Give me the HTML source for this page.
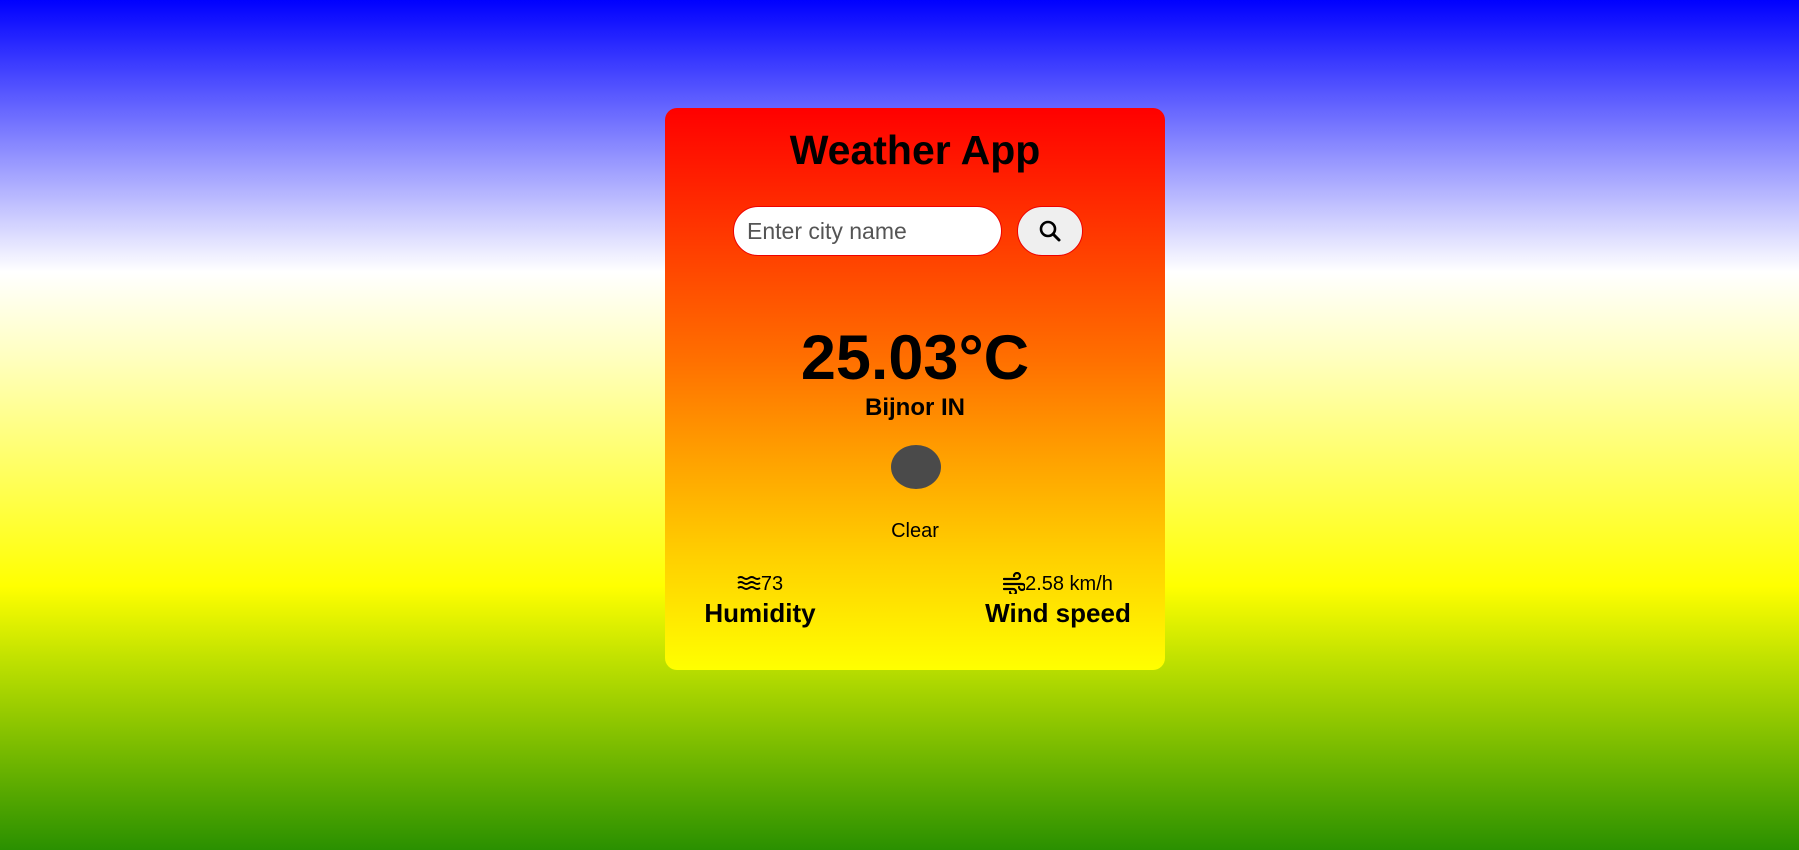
<!DOCTYPE html>
<html><head><style>
html,body{margin:0;width:1799px;height:850px;overflow:hidden}
body{background:linear-gradient(#0000ff 0%,#ffffff 32%,#ffffc0 42%,#ffff00 69%,#bde000 78%,#2a9000 100%);font-family:"Liberation Sans",sans-serif;position:relative}
.card{position:absolute;left:665px;top:108px;width:500px;height:562px;border-radius:12px;background:linear-gradient(#ff0000,#ff7000 45%,#ffa000 62%,#ffd000 80%,#ffff00)}
.abs{position:absolute;left:0;width:500px;text-align:center;color:#000}
h1{margin:0;font-size:41px;font-weight:bold;top:19px}
.inp{position:absolute;left:68px;top:98px;width:269px;height:50px;border-radius:25px;background:#fff;border:1px solid #e00;box-sizing:border-box;font-size:23px;color:#555;line-height:48px;padding-left:13px}
.btn{position:absolute;left:352px;top:98px;width:66px;height:50px;border-radius:25px;background:#efefef;border:1px solid #e00;box-sizing:border-box}
.blob{position:absolute;left:226px;top:337px;width:50px;height:44px;border-radius:50%;background:#4a4a4a}
</style></head><body>
<div class="card">
<h1 class="abs">Weather App</h1>
<div class="inp">Enter city name</div>
<div class="btn"><svg width="66" height="50" viewBox="0 0 66 50" style="position:absolute;left:-1px;top:-1px"><circle cx="31" cy="23" r="7" fill="none" stroke="#000" stroke-width="2.6"/><line x1="36" y1="28" x2="42" y2="34" stroke="#000" stroke-width="3" stroke-linecap="round"/></svg></div>
<div class="abs" style="top:212px;font-size:63px;font-weight:bold;line-height:76px">25.03°C</div>
<div class="abs" style="top:286px;font-size:24px;font-weight:bold">Bijnor IN</div>
<div class="blob"></div>
<div class="abs" style="top:412px;font-size:20px">Clear</div>
<div style="position:absolute;left:20px;width:150px;top:464px;text-align:center">
<div style="font-size:20px;line-height:24px"><svg width="24" height="16" viewBox="0 0 24 16" style="vertical-align:-1px"><path d="M1 3q2.75-2 5.5 0t5.5 0t5.5 0t5.5 0M1 8q2.75-2 5.5 0t5.5 0t5.5 0t5.5 0M1 13q2.75-2 5.5 0t5.5 0t5.5 0t5.5 0" fill="none" stroke="#000" stroke-width="2"/></svg>73</div>
<div style="font-size:26px;font-weight:bold;margin-top:2px">Humidity</div></div>
<div style="position:absolute;left:312px;width:162px;top:464px;text-align:center">
<div style="font-size:20px;line-height:24px"><svg width="22" height="22" viewBox="0 0 22 22" style="vertical-align:-4px"><path d="M1 7h13a3 3 0 1 0-3-3M1 12h18a3 3 0 1 1-3 3M1 17h9a3 3 0 1 1-3 3" fill="none" stroke="#000" stroke-width="2.2" stroke-linecap="round"/></svg>2.58 km/h</div>
<div style="font-size:26px;font-weight:bold;margin-top:2px">Wind speed</div></div>
</div>
</body></html>
